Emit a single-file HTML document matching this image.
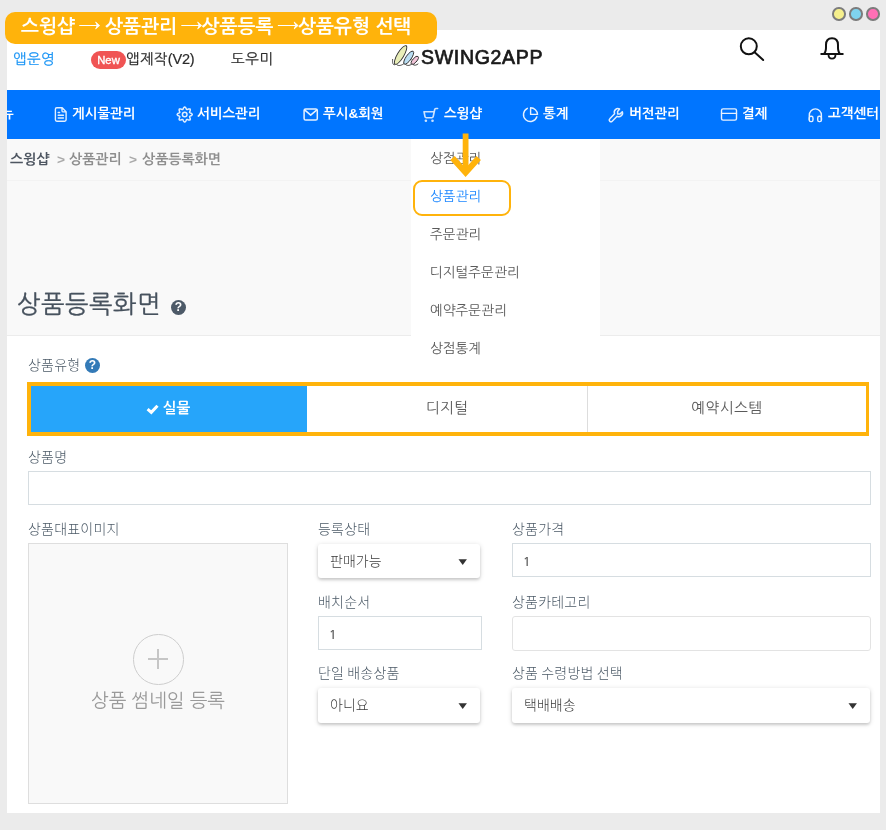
<!DOCTYPE html>
<html lang="ko">
<head>
<meta charset="utf-8">
<title>상품등록화면</title>
<style>
*{box-sizing:border-box;margin:0;padding:0}
html,body{width:886px;height:830px;overflow:hidden}
.abs{will-change:transform}
body{background:#ebebeb;font-family:"Liberation Sans","NanumGothic","Noto Sans CJK KR",sans-serif;position:relative;color:#333}
.abs{position:absolute;white-space:nowrap}
#panel{left:7px;top:30px;width:873px;height:783px;background:#fff;overflow:hidden}
/* banner */
#banner{left:5px;top:12px;width:432px;height:32px;background:#ffb30b;border-radius:10px;color:#fff;font-weight:bold;font-size:19.150px;line-height:29px;padding-left:16px}
.ar{font-family:"NanumGothic",sans-serif;font-weight:normal;display:inline-block;width:19.300px;font-size:22px;line-height:20px;text-align:center;text-indent:-1px;-webkit-text-stroke:0.550px #fff}
.dot{width:13.500px;height:13.500px;border-radius:50%;border:2px solid #7c7c7c;top:7px}
/* top header */
.top{font-size:14.500px;color:#2a2a2a;line-height:20px;top:49px;-webkit-text-stroke:0.200px}
#new{left:91px;top:51px;width:35px;height:18px;border-radius:9px;background:#f05454;color:#fff;font-size:11.300px;-webkit-text-stroke:0.350px #fff;line-height:18px;text-align:center}
/* nav */
#nav{left:7px;top:90px;width:873px;height:49px;background:#0075ff}
.nv{top:104px;color:#fff;font-weight:bold;font-size:13.500px;line-height:20px}
.ni{position:absolute}
/* sub header */
#sub{left:7px;top:139px;width:873px;height:197px;background:#f9f9f9;border-bottom:1px solid #ececec}
#subline{left:7px;top:180px;width:873px;height:1px;background:#f3f3f3}
.bc{top:149px;font-size:14px;line-height:20px;color:#8e8e8e;font-weight:bold}
#title{left:16.500px;top:287px;font-size:25px;line-height:34px;color:#47525e;letter-spacing:0.500px;-webkit-text-stroke:0.300px}
.q{width:15px;height:15px;border-radius:50%;color:#fff;font-weight:bold;font-size:12px;line-height:15px;text-align:center;font-family:"Liberation Sans",sans-serif}
.v{font-family:"NanumGothic","Liberation Sans",sans-serif;font-size:12.500px;color:#444;position:relative;left:-1px;top:0.500px;-webkit-text-stroke:0.200px}
/* dropdown */
#dd{left:411px;top:139px;width:189px;height:232px;background:#fff}
.di{left:430px;font-size:13.600px;line-height:20px;color:#5a5a5a}
#hl{left:412.500px;top:180px;width:98px;height:36px;border:2px solid #ffb30b;border-radius:9px}
/* form */
.lb{font-family:"Liberation Sans","Noto Sans CJK KR",sans-serif;font-size:14px;line-height:18px;color:#4c5a67;font-weight:300;letter-spacing:0.200px}
.inp{font-family:"Liberation Sans","Noto Sans CJK KR",sans-serif;border:1px solid #d6dde1;background:#fff;font-size:14px;color:#333;line-height:32px;padding-left:11px}
.sel{font-family:"Liberation Sans","Noto Sans CJK KR",sans-serif;background:#fff;font-size:14px;color:#3a3a3a;font-weight:300;line-height:34px;padding-left:12px;box-shadow:0 2px 3px 0 rgba(0,0,0,.13),0 1px 5px 0 rgba(0,0,0,.16);border-radius:3px}
.car{position:absolute;right:13px;top:1px;font-size:11px;color:#333;font-family:"DejaVu Sans",sans-serif;transform:scaleY(.68);font-weight:normal}
#seg{left:27px;top:382px;width:842px;height:54px;border:4px solid #ffb30b;border-right-width:3px;background:#fff}
.sg{top:386px;height:46px;font-size:14.700px;line-height:45px;text-align:center;color:#5a5a5a}
</style>
</head>
<body>
<div id="panel" class="abs"></div>

<!-- window dots -->
<div class="abs dot" style="left:832px;background:#f5ef8c"></div>
<div class="abs dot" style="left:849px;background:#7fd3ee"></div>
<div class="abs dot" style="left:866px;background:#ff6fb5"></div>

<!-- top header -->
<div class="abs top" style="left:13px;color:#1e96f5;letter-spacing:0.400px">앱운영</div>
<div class="abs" id="new">New</div>
<div class="abs top" style="left:126px;letter-spacing:0.300px">앱제작<span style="letter-spacing:-0.200px">(V2)</span></div>
<div class="abs top" style="left:231px;letter-spacing:0.500px">도우미</div>

<!-- logo -->
<svg class="abs" style="left:385px;top:35px" width="40" height="40" viewBox="385 35 40 40">
 <g stroke="#333" stroke-width="0.900" fill="none" stroke-linecap="round">
  <ellipse cx="400.600" cy="55" rx="3.200" ry="10.800" transform="rotate(31 400.600 55)" fill="#e9eeb8"/>
  <ellipse cx="408.700" cy="57.700" rx="2.700" ry="7.800" transform="rotate(35 408.700 57.700)" fill="#b9def3"/>
  <ellipse cx="414.800" cy="60.300" rx="2.100" ry="5" transform="rotate(40 414.800 60.300)" fill="#f3c6da"/>
  <path d="M392.600 59.500 C392.300 62.500 392.800 65.300 394.500 64.800 M396.500 64.200 C397.500 66.200 400.500 66 403.500 64 M405.500 64.300 C406.500 66 409.500 65.800 411.500 64.300 M413 64.600 C414.500 65.800 416.500 65.200 418 64"/>
 </g>
</svg>
<div class="abs" style="left:421px;top:45px;font-size:19.500px;line-height:24px;color:#1a1a1a;letter-spacing:0.700px;-webkit-text-stroke:0.700px #1a1a1a">SWING2APP</div>

<!-- search / bell -->
<svg class="abs" style="left:736px;top:34px" width="32" height="30" viewBox="0 0 32 30">
 <circle cx="12.8" cy="12.3" r="8" fill="none" stroke="#111" stroke-width="2"/>
 <path d="M18.6 18.2 L27.2 26" stroke="#111" stroke-width="2" stroke-linecap="round"/>
</svg>
<svg class="abs" style="left:816px;top:34px" width="32" height="30" viewBox="0 0 32 30">
 <path d="M4.5 20 H27.5 M8 20 C10.5 17.5 10 14 10 11 C10 6.5 12.5 4.3 16 4.3 C19.5 4.3 22 6.5 22 11 C22 14 21.500 17.5 24 20" fill="none" stroke="#111" stroke-width="2" stroke-linejoin="round"/>
 <path d="M12.5 20.5 C12.5 23.2 14 24.6 16 24.6 C18 24.6 19.5 23.2 19.5 20.5" fill="none" stroke="#111" stroke-width="1.8"/>
</svg>

<!-- nav -->
<div id="nav" class="abs"></div>
<div class="abs nv" style="left:7px;width:20px;height:20px;overflow:hidden"><span style="position:relative;left:-6px">뉴</span></div>
<div class="abs nv" style="left:72px">게시물관리</div>
<div class="abs nv" style="left:197px">서비스관리</div>
<div class="abs nv" style="left:323px">푸시&amp;회원</div>
<div class="abs nv" style="left:444px">스윙샵</div>
<div class="abs nv" style="left:543px">통계</div>
<div class="abs nv" style="left:629px">버전관리</div>
<div class="abs nv" style="left:742px">결제</div>
<div class="abs nv" style="left:828px">고객센터</div>

<!-- nav icons -->
<svg class="abs" style="left:0;top:90px" width="886" height="49" viewBox="0 90 886 49" fill="none" stroke="#fff" stroke-width="1.4" stroke-linecap="round" stroke-linejoin="round">
 <g opacity=".88">
  <path d="M56.800 107.800 H62.200 L66.100 111.800 V119.800 Q66.100 121.200 64.700 121.200 H56.800 Q55.400 121.200 55.400 119.800 V109.200 Q55.400 107.800 56.800 107.800 Z M62 108 V110.700 Q62 111.900 63.200 111.900 H66"/>
  <path d="M58.200 112.600 H59.600 M58.200 115.300 H63.400 M58.200 118 H63.400" stroke-width="1.500"/>
 </g>
 <g opacity=".88">
  <path d="M192.3 114.5L191.9 115.2L191.0 115.8L190.1 116.1L189.6 116.5L189.7 117.2L190.1 118.1L190.3 119.1L190.1 119.9L189.3 120.1L188.3 119.9L187.4 119.5L186.7 119.4L186.3 119.9L186.0 120.8L185.4 121.7L184.7 122.1L184.0 121.7L183.4 120.8L183.1 119.9L182.7 119.4L182.0 119.5L181.1 119.9L180.1 120.1L179.3 119.9L179.1 119.1L179.3 118.1L179.7 117.2L179.8 116.5L179.3 116.1L178.4 115.8L177.5 115.2L177.1 114.5L177.5 113.8L178.4 113.2L179.3 112.9L179.8 112.5L179.7 111.8L179.3 110.9L179.1 109.9L179.3 109.1L180.1 108.9L181.1 109.1L182.0 109.5L182.7 109.6L183.1 109.1L183.4 108.2L184.0 107.3L184.7 106.9L185.4 107.3L186.0 108.2L186.3 109.1L186.7 109.6L187.4 109.5L188.3 109.1L189.3 108.9L190.1 109.1L190.3 109.9L190.1 110.9L189.7 111.8L189.6 112.5L190.1 112.9L191.0 113.2L191.9 113.8Z" stroke-width="1.500"/>
  <circle cx="184.700" cy="114.500" r="2.300" stroke-width="1.500"/>
 </g>
 <g opacity=".9">
  <rect x="304.100" y="108.900" width="13.200" height="11.100" rx="1.600" stroke-width="1.500"/>
  <path d="M304.600 109.900 L310.700 115.100 L316.800 109.900" stroke-width="1.500"/>
 </g>
 <g opacity=".8">
  <path d="M437.600 108.500 H435.800 Q434.900 108.500 434.700 109.500 L433.200 116.600 Q432.900 117.700 431.800 117.700 H426.300 Q425.200 117.700 425 116.600 L424 111.700 H434.100" stroke-width="1.650"/>
  <circle cx="425.900" cy="120.800" r="1.300" fill="#fff" stroke="none"/>
  <circle cx="432.500" cy="120.800" r="1.300" fill="#fff" stroke="none"/>
 </g>
 <g opacity=".9">
  <path d="M527.400 108.300 A6.900 6.900 0 1 0 536.900 116.800" stroke-width="1.400"/>
  <path d="M530.600 107.700 V114.400 H537.500 A7 7 0 0 0 530.600 107.700 Z" stroke-width="1.400"/>
 </g>
 <g opacity=".88">
  <path d="M619.600 109 A3.700 3.700 0 0 0 614.600 113.800 L609.800 118.700 A1.700 1.700 0 0 0 612.200 121.200 L617.100 116.300 A3.700 3.700 0 0 0 622.300 111.700 L620 114 H617.600 V111.400 Z" stroke-width="1.500"/>
 </g>
 <g opacity=".9">
  <rect x="721.500" y="108.900" width="15" height="11.200" rx="1.600" stroke-width="1.400"/>
  <path d="M721.500 113.400 H736.500" stroke-width="1.400"/>
 </g>
 <g opacity=".9">
  <path d="M809.300 120 V115.200 A6.050 6.300 0 0 1 821.400 115.200 V120" stroke-width="1.400"/>
  <rect x="809.300" y="116.300" width="3.700" height="5.300" rx="1.600" stroke-width="1.400"/>
  <rect x="817.700" y="116.300" width="3.700" height="5.300" rx="1.600" stroke-width="1.400"/>
 </g>
</svg>

<!-- sub header -->
<div id="sub" class="abs"></div>
<div id="subline" class="abs"></div>
<div class="abs bc" style="left:10px;color:#4e5661;font-weight:bold;-webkit-text-stroke:0">스윙샵</div>
<div class="abs bc" style="left:56.500px;top:150px;font-size:12px;color:#aaa;transform:scaleX(1.15);transform-origin:0 0">&gt;</div>
<div class="abs bc" style="left:69px">상품관리</div>
<div class="abs bc" style="left:128.500px;top:150px;font-size:12px;color:#aaa;transform:scaleX(1.15);transform-origin:0 0">&gt;</div>
<div class="abs bc" style="left:142px">상품등록화면</div>
<div id="title" class="abs">상품등록화면</div>

<div class="abs q" style="left:171.200px;top:299.500px;background:#4d5a68">?</div>
<div class="abs q" style="left:85px;top:358px;background:#337ab7">?</div>

<!-- dropdown -->
<div id="dd" class="abs"></div>
<div class="abs di" style="top:149px">상점관리</div>
<div class="abs di" style="top:187px;color:#1e88ff">상품관리</div>
<div class="abs di" style="top:225px">주문관리</div>
<div class="abs di" style="top:263px">디지털주문관리</div>
<div class="abs di" style="top:301px">예약주문관리</div>
<div class="abs di" style="top:339px">상점통계</div>
<div id="hl" class="abs"></div>
<svg class="abs" style="left:445px;top:130px" width="40" height="52" viewBox="0 0 40 52">
 <path d="M20.600 3.500 V42" stroke="#ffb30b" stroke-width="5.800" fill="none"/>
 <path d="M7.500 28 L20.600 42.500 L33.700 28" stroke="#ffb30b" stroke-width="6" fill="none" stroke-linejoin="miter"/>
</svg>

<!-- form -->
<div class="abs lb" style="left:28px;top:356px">상품유형</div>
<div id="seg" class="abs"></div>
<div class="abs sg" style="left:31px;width:276px;background:#26a5fa;color:#fff;font-weight:bold;padding-left:15px">실물</div>
<svg class="abs" style="left:144px;top:400px" width="18" height="18" viewBox="144 400 18 18"><path d="M147.600 409.100 L151.300 412.300 L157.500 405.700" fill="none" stroke="#fff" stroke-width="3" stroke-linejoin="miter"/></svg>
<div class="abs sg" style="left:307px;width:281px;border-right:1px solid #ddd;letter-spacing:0.300px">디지털</div>
<div class="abs sg" style="left:588px;width:278px;letter-spacing:0.500px">예약시스템</div>

<div class="abs lb" style="left:28px;top:448px">상품명</div>
<div class="abs inp" style="left:28px;top:471px;width:843px;height:34px"></div>

<div class="abs lb" style="left:28px;top:520px">상품대표이미지</div>
<div class="abs" style="left:28px;top:543px;width:260px;height:261px;background:#f9f9f9;border:1px solid #dedede"></div>
<div class="abs" style="left:133px;top:633.500px;width:50.500px;height:50.500px;border-radius:50%;border:1px solid #cdcdcd"></div>
<div class="abs" style="left:148.300px;top:657.800px;width:19.700px;height:1.800px;background:#c6c6c6"></div>
<div class="abs" style="left:157.300px;top:648.900px;width:1.800px;height:19.900px;background:#c6c6c6"></div>
<div class="abs" style="left:28px;top:688px;width:260px;text-align:center;font-size:18.800px;line-height:26px;color:#9a9a9a">상품 썸네일 등록</div>

<div class="abs lb" style="left:318px;top:520px">등록상태</div>
<div class="abs sel" style="left:318px;top:544px;width:162px;height:33.500px">판매가능<span class="car">▼</span></div>
<div class="abs lb" style="left:512px;top:520px">상품가격</div>
<div class="abs inp" style="left:512px;top:543px;width:359px;height:34px"><span class="v">1</span></div>

<div class="abs lb" style="left:318px;top:593px">배치순서</div>
<div class="abs inp" style="left:318px;top:616px;width:164px;height:34px"><span class="v">1</span></div>
<div class="abs lb" style="left:512px;top:593px">상품카테고리</div>
<div class="abs inp" style="left:512px;top:616px;width:358.500px;height:35px;border-color:#e3e3e3;border-radius:3px"></div>

<div class="abs lb" style="left:318px;top:664px;word-spacing:-1px">단일 배송상품</div>
<div class="abs sel" style="left:318px;top:687.500px;width:162px;height:35px">아니요<span class="car">▼</span></div>
<div class="abs lb" style="left:512px;top:664px;word-spacing:-1px">상품 수령방법 선택</div>
<div class="abs sel" style="left:512px;top:687.500px;width:358px;height:35px">택배배송<span class="car">▼</span></div>

<!-- banner on top -->
<div id="banner" class="abs">스윙샵 <span class="ar">→</span> 상품관리 <span class="ar">→</span>상품등록 <span class="ar">→</span>상품유형 선택</div>
</body>
</html>
